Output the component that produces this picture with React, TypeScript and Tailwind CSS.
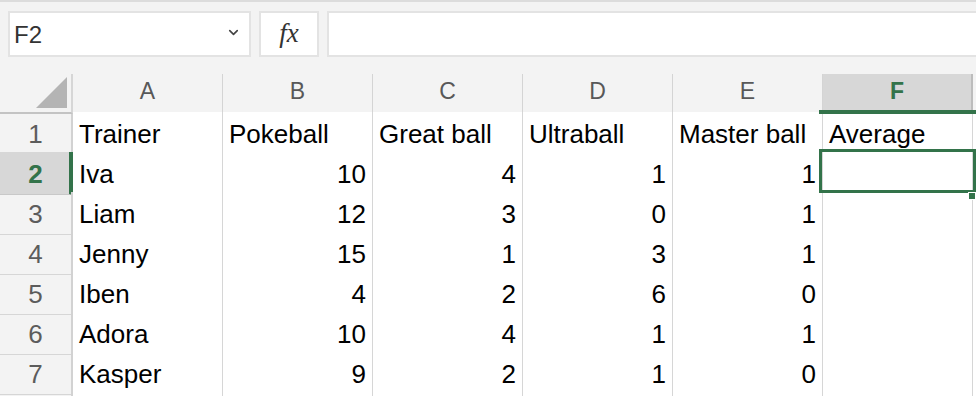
import { ChevronDown } from "lucide-react";

const columns = ["A", "B", "C", "D", "E", "F"];

const rows: (string | number)[][] = [
  ["Trainer", "Pokeball", "Great ball", "Ultraball", "Master ball", "Average"],
  ["Iva", 10, 4, 1, 1, ""],
  ["Liam", 12, 3, 0, 1, ""],
  ["Jenny", 15, 1, 3, 1, ""],
  ["Iben", 4, 2, 6, 0, ""],
  ["Adora", 10, 4, 1, 1, ""],
  ["Kasper", 9, 2, 1, 0, ""],
  ["", "", "", "", "", ""],
];

function FormulaBar() {
  return (
    <div className="flex h-[74px] items-start gap-2 border-t-2 border-[#dcdcdc] pl-2 pt-[9px]">
      <div className="flex h-[46px] w-[243px] items-center justify-between border-2 border-[#e3e3e3] bg-white pl-[4px] pr-[8px]">
        <span className="pt-[1px] text-[24px] text-[#333]">F2</span>
        <ChevronDown size={15} strokeWidth={2.6} className="mb-[4px] text-[#444]" />
      </div>
      <div className="flex h-[46px] w-[60px] items-center justify-center border-2 border-[#e3e3e3] bg-white">
        <span className="pb-[2px] font-['Liberation_Serif',serif] text-[27px] italic text-[#333]">fx</span>
      </div>
      <div className="h-[46px] flex-1 border-2 border-r-0 border-[#e3e3e3] bg-white" />
    </div>
  );
}

function HeaderRow() {
  return (
    <div className="grid h-[38px] grid-cols-[73px_repeat(6,150px)_1fr]">
      <div className="relative border-r-2 border-b-2 border-r-[#d6d6d6] border-b-[#c3c3c3]">
        <svg width="31" height="31" viewBox="0 0 31 31" className="absolute left-[36px] top-[3px]">
          <polygon points="31,0 31,31 0,31" fill="#b4b4b4" />
        </svg>
      </div>
      {columns.map((c) => {
        const active = c === "F";
        return (
          <div
            key={c}
            className={
              active
                ? "relative flex items-center justify-center border-r-2 border-b-2 border-r-[#bcbcbc] border-b-[#c3c3c3] bg-[#d7d7d7] pb-[3px] text-[23px] font-bold text-[#33734a]"
                : "flex items-center justify-center border-r border-b-2 border-r-[#d4d4d4] border-b-[#c3c3c3] pb-[3px] text-[23px] text-[#585858]"
            }
          >
            {c}
            {active && <div className="absolute -left-[4px] -right-[6px] bottom-[-2px] z-10 h-[4px] bg-[#33734a]" />}
          </div>
        );
      })}
      <div className="border-b-2 border-[#c3c3c3]" />
    </div>
  );
}

function DataRow({ index, cells, label }: { index: number; cells: (string | number)[]; label: boolean }) {
  const selected = index === 2;
  return (
    <div className="grid h-[40px] grid-cols-[73px_repeat(6,150px)_1fr]">
      <div
        className={
          selected
            ? "flex items-center justify-center border-r-4 border-b border-r-[#33734a] border-b-[#c8c8c8] bg-[#d7d7d7] pl-[2px] pt-[2px] text-[26px] font-bold text-[#33734a]"
            : "flex items-center justify-center border-r-2 border-b border-r-[#d2d2d2] border-b-[#d6d6d6] pt-[2px] text-[26px] text-[#5c5c5c]"
        }
      >
        {label ? index : ""}
      </div>
      {cells.map((v, i) => (
        <div
          key={i}
          className={
            "relative flex items-center border-r border-b border-[#d6d6d6] bg-white px-[6px] pt-[3px] text-[26px] text-black " +
            (typeof v === "number" ? "justify-end" : "justify-start")
          }
        >
          <span className="whitespace-nowrap">{v}</span>
          {selected && i === 5 && (
            <>
              <div className="absolute -left-[4px] -top-[3px] z-10 h-[44px] w-[157px] border-[3px] border-[#33734a]" />
              <div className="absolute -right-[4px] -bottom-[6px] z-20 h-[8px] w-[8px] border border-white bg-[#33734a]" />
            </>
          )}
        </div>
      ))}
      <div className="border-b border-[#d6d6d6] bg-white" />
    </div>
  );
}

export default function App() {
  return (
    <div className="h-[396px] w-[976px] overflow-hidden bg-[#f3f3f3] font-['Liberation_Sans',Arial,sans-serif]">
      <FormulaBar />
      <HeaderRow />
      {rows.map((cells, i) => (
        <DataRow key={i} index={i + 1} cells={cells} label={i < 7} />
      ))}
    </div>
  );
}
